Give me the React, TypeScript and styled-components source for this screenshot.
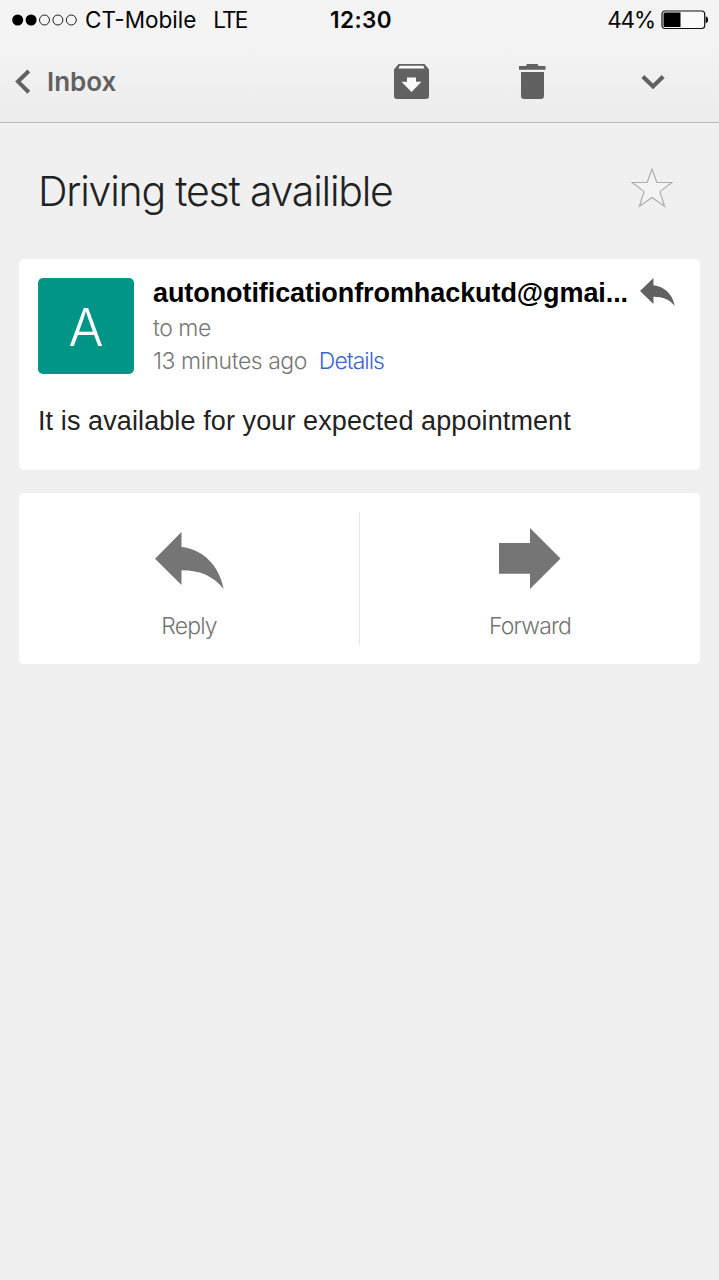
import React from 'react';
import styled, { createGlobalStyle } from 'styled-components';

const GlobalStyle = createGlobalStyle`
  * { box-sizing: border-box; }
  body { margin: 0; background: #f0f0f0; font-family: Inter, "Liberation Sans", sans-serif; }
  svg { display: block; flex: none; }
`;

const Screen = styled.div`
  width: 719px;
  min-height: 1280px;
  background: #f0f0f0;
`;

const Header = styled.header`
  height: 123px;
  background: linear-gradient(#f4f4f4, #f3f3f3 40%, #ececec);
  border-bottom: 1px solid #b9b9b9;
`;

const StatusBar = styled.div`
  display: grid;
  grid-template-columns: 1fr auto 1fr;
  align-items: center;
  height: 40px;
  padding: 0 10px 0 12px;
  font-size: 22.5px;
  line-height: 40px;
  color: #050505;
`;

const StatusGroup = styled.div<{ $end?: boolean }>`
  display: flex;
  align-items: center;
  justify-content: ${(p) => (p.$end ? 'flex-end' : 'flex-start')};
  white-space: nowrap;
`;

const Carrier = styled.span`
  margin-left: 8px;
`;

const Network = styled.span`
  margin-left: 17px;
  letter-spacing: -1.8px;
`;

const Clock = styled.span`
  padding-left: 1px;
  font-weight: 600;
  letter-spacing: 0.4px;
`;

const Percent = styled.span`
  margin-right: 6px;
  letter-spacing: -1.1px;
`;

const NavBar = styled.nav`
  display: flex;
  align-items: center;
  height: 82px;
  padding: 0 6px 0 14px;
  color: #616161;
`;

const BackButton = styled.div`
  display: flex;
  align-items: center;
  flex: 1;
  gap: 15px;
  font-size: 26px;
  font-weight: 600;
  line-height: 40px;
`;

const BackLabel = styled.span`
  padding-top: 2px;
`;

const NavActions = styled.div`
  display: grid;
  grid-template-columns: repeat(3, 120.5px);
  align-items: center;
  justify-items: center;
`;

const Subject = styled.div`
  display: flex;
  align-items: center;
  justify-content: space-between;
  height: 136px;
  padding: 0 46px 6px 38px;
`;

const SubjectText = styled.h1`
  margin: 0;
  padding-top: 5px;
  font-size: 41px;
  font-weight: 300;
  line-height: 50px;
  letter-spacing: -1.2px;
  color: #222;
`;

const Card = styled.section`
  margin: 0 19px 23px;
  background: #fff;
  border-radius: 5px;
`;

const Message = styled(Card)`
  height: 211px;
  padding: 19px 25px 0 19px;
`;

const MessageHead = styled.div`
  display: flex;
  gap: 19px;
`;

const Avatar = styled.div`
  display: flex;
  align-items: center;
  justify-content: center;
  flex: none;
  width: 96px;
  height: 96px;
  padding-top: 3px;
  border-radius: 5px;
  background: #009587;
  color: #fff;
  font-size: 52px;
  font-weight: 300;
  line-height: 93px;
`;

const Sender = styled.div`
  flex: 1;
  min-width: 0;
`;

const SenderRow = styled.div`
  display: flex;
  align-items: center;
  justify-content: space-between;
  height: 28px;
  margin-bottom: 2px;
`;

const Address = styled.span`
  padding-top: 2px;
  font-family: "Liberation Sans", sans-serif;
  font-size: 27px;
  font-weight: 700;
  line-height: 28px;
  letter-spacing: -0.08px;
  white-space: nowrap;
  color: #000;
`;

const Meta = styled.div`
  display: flex;
  gap: 12px;
  height: 33px;
  font-size: 23px;
  font-weight: 300;
  line-height: 40px;
  letter-spacing: -0.47px;
  white-space: nowrap;
  color: #777;
`;

const DetailsLink = styled.span`
  letter-spacing: -1px;
  color: #3c66cf;
`;

const Body = styled.p`
  margin: 31px 0 0;
  font-family: "Liberation Sans", sans-serif;
  font-size: 27px;
  line-height: 32px;
  letter-spacing: 0.1px;
  white-space: nowrap;
  color: #222;
`;

const Actions = styled(Card)`
  display: flex;
  height: 171px;
  padding: 19px 0;
`;

const Action = styled.div`
  display: flex;
  flex: 1;
  flex-direction: column;
  align-items: center;
  color: #757575;
  & + & { border-left: 1px solid #e6e6e6; }
`;

const ActionIcon = styled.div`
  display: flex;
  align-items: center;
  height: 61px;
  margin: 16px 0 18px;
`;

const ActionLabel = styled.span`
  font-size: 23px;
  font-weight: 300;
  line-height: 38px;
  letter-spacing: -0.8px;
`;

const SignalDots = () => (
  <svg width="65" height="12" viewBox="0 0 65 12">
    {[0, 1, 2, 3, 4].map((i) => (
      <circle key={i} cx={5.7 + i * 13.4} cy="6" r={i < 2 ? 5.5 : 5} fill={i < 2 ? '#000' : 'none'} stroke={i < 2 ? 'none' : '#222'} />
    ))}
  </svg>
);

const Battery = () => (
  <svg width="48" height="20" viewBox="0 0 48 20">
    <rect x="1" y="1" width="42.7" height="17.5" rx="3" fill="#fafafa" stroke="#111" strokeWidth="1.2" />
    <path d="M4 2.5H19.5V17H4a1.5 1.5 0 0 1-1.5-1.5V4A1.5 1.5 0 0 1 4 2.5Z" fill="#000" />
    <path d="M44.7 6.5c3.2.2 3.2 6.5 0 6.7Z" fill="#000" />
  </svg>
);

const BackIcon = () => (
  <svg width="18" height="26" viewBox="0 0 18 26">
    <path d="M14.8 3 4 13.6l10.8 10.6" fill="none" stroke="currentColor" strokeWidth="4" />
  </svg>
);

const ArchiveIcon = () => (
  <svg width="35" height="35" viewBox="0 0 35 35">
    <path d="M5 1.500H30V15H28V28H7V15H5Z" fill="#fafafa" />
    <path fillRule="evenodd" fill="currentColor" d="M4.5 0H30.5L35 5.5V32a3 3 0 0 1-3 3H3a3 3 0 0 1-3-3V5.5ZM5.7 1.8 4.5 4.5H30.5L29.3 1.8ZM13 13.6V17.8H7.5L17.5 28 27.5 17.8H22V13.6Z" />
  </svg>
);

const TrashIcon = () => (
  <svg width="27" height="35" viewBox="0 0 27 35">
    <path fill="currentColor" d="M0 2H7L8 0H18.5L19.5 2H26.5V5.8H0ZM2 7.9H25V32a3 3 0 0 1-3 3H5a3 3 0 0 1-3-3Z" />
  </svg>
);

const ChevronIcon = () => (
  <svg width="26" height="18" viewBox="0 0 26 18">
    <path d="M2.8 4.4 13 14.4 23.2 4.4" fill="none" stroke="currentColor" strokeWidth="4.2" />
  </svg>
);

const StarIcon = () => (
  <svg width="42" height="40" viewBox="0 0 42 40">
    <path d="M21 1 25.8 14.5H41L28.9 23.6 33.6 38.3 21 29.5 8.4 38.3 13.1 23.6 1 14.5H16.2Z" fill="#f3f3f3" stroke="#adadad" strokeWidth="1.2" />
  </svg>
);

const ReplyIcon = ({ width, height, color }: { width: number; height: number; color: string }) => (
  <svg width={width} height={height} viewBox="0 0 69 57" preserveAspectRatio="none">
    <path fill={color} d="M0 26.7 26.5 0V15C48 17.5 64 33 68.7 57 58 44 46 38.5 26.5 38.3V53Z" />
  </svg>
);

const ReplyLarge = styled.div`
  padding-top: 4px;
`;

const ForwardIcon = () => (
  <svg width="62" height="61" viewBox="0 0 62 61">
    <path d="M0 15H31V0L61.5 30.5 31 61V45.7H0Z" fill="currentColor" />
  </svg>
);

export default function App() {
  return (
    <Screen>
      <GlobalStyle />
      <Header>
        <StatusBar>
          <StatusGroup>
            <SignalDots />
            <Carrier>CT-Mobile</Carrier>
            <Network>LTE</Network>
          </StatusGroup>
          <Clock>12:30</Clock>
          <StatusGroup $end>
            <Percent>44%</Percent>
            <Battery />
          </StatusGroup>
        </StatusBar>
        <NavBar>
          <BackButton>
            <BackIcon />
            <BackLabel>Inbox</BackLabel>
          </BackButton>
          <NavActions>
            <ArchiveIcon />
            <TrashIcon />
            <ChevronIcon />
          </NavActions>
        </NavBar>
      </Header>
      <Subject>
        <SubjectText>Driving test availible</SubjectText>
        <StarIcon />
      </Subject>
      <Message>
        <MessageHead>
          <Avatar>A</Avatar>
          <Sender>
            <SenderRow>
              <Address>autonotificationfromhackutd@gmai...</Address>
              <ReplyIcon width={35} height={28} color="#616161" />
            </SenderRow>
            <Meta>to me</Meta>
            <Meta>
              <span>13 minutes ago</span>
              <DetailsLink>Details</DetailsLink>
            </Meta>
          </Sender>
        </MessageHead>
        <Body>It is available for your expected appointment</Body>
      </Message>
      <Actions>
        <Action>
          <ActionIcon>
            <ReplyLarge>
              <ReplyIcon width={69} height={57} color="#757575" />
            </ReplyLarge>
          </ActionIcon>
          <ActionLabel>Reply</ActionLabel>
        </Action>
        <Action>
          <ActionIcon>
            <ForwardIcon />
          </ActionIcon>
          <ActionLabel>Forward</ActionLabel>
        </Action>
      </Actions>
    </Screen>
  );
}
